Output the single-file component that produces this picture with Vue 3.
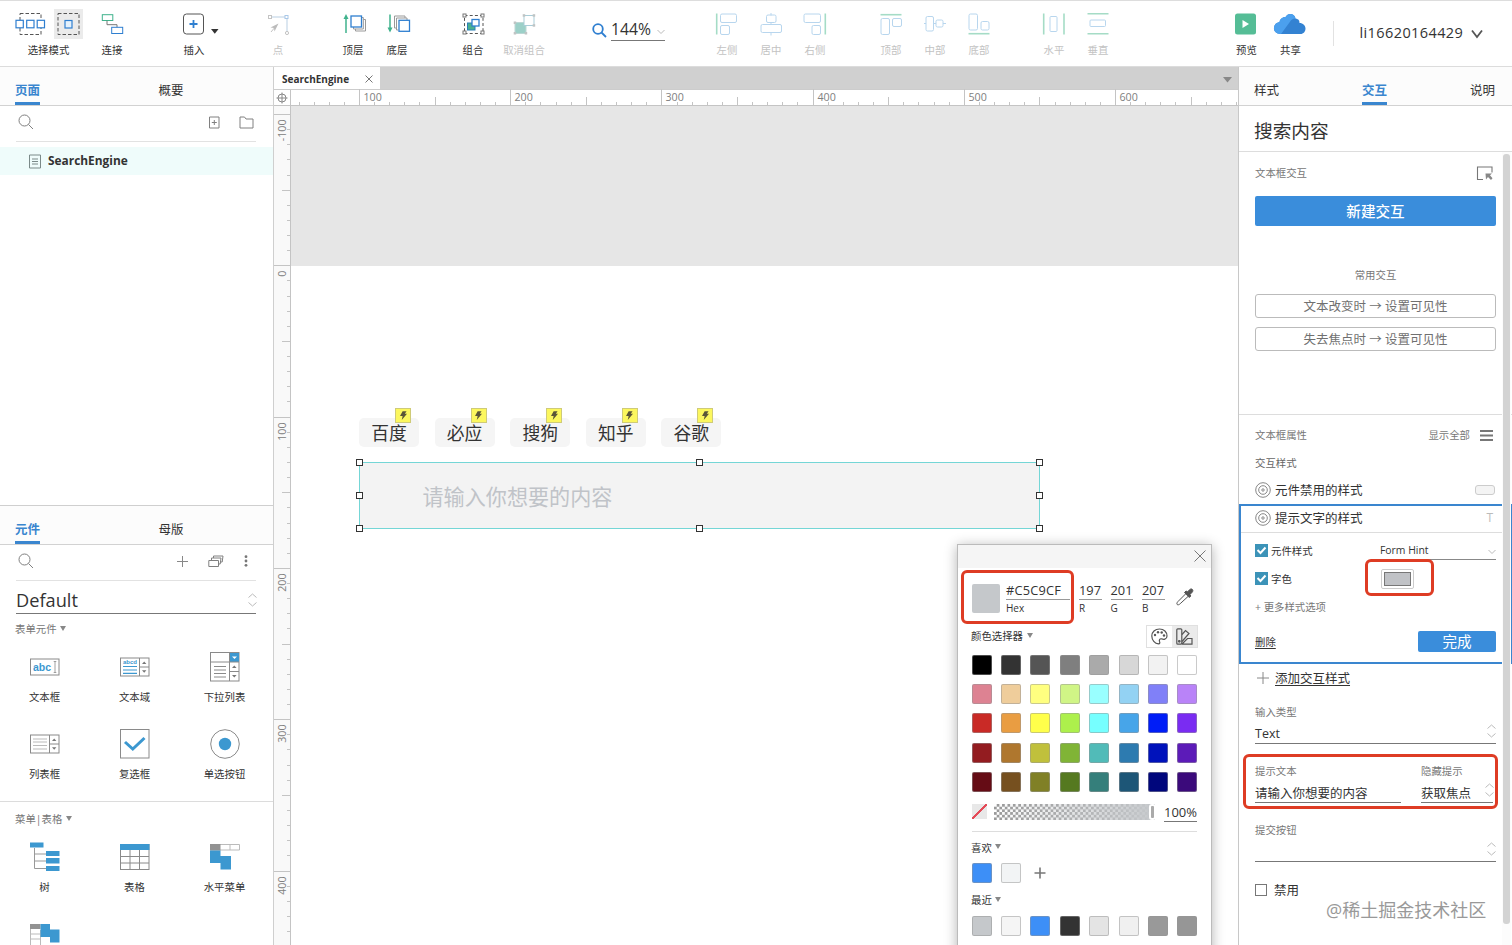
<script setup>
import { computed } from 'vue'

const boxes = {
  left: '<path d="M1.7 1.5v21" stroke="#a5dcc6" stroke-width="1.6"/><rect x="5.5" y="2" width="16" height="8.5" rx="1.5"/><rect x="5.5" y="13.5" width="9" height="9" rx="1.5"/>',
  center: '<path d="M12 1v2.500M12 10.500v2M12 20.500v3" /><rect x="7.500" y="3" width="9.500" height="7.500" rx="1.5"/><rect x="2" y="12.500" width="20.500" height="8" rx="1.5"/>',
  right: '<path d="M22.300 1.500v21" stroke="#a5dcc6" stroke-width="1.600"/><rect x="1" y="2" width="16.500" height="8.500" rx="1.500"/><rect x="9" y="13.500" width="8.500" height="9" rx="1.500"/>',
  top: '<path d="M1.500 2.700h21" stroke="#a5dcc6" stroke-width="1.600"/><rect x="2" y="6.500" width="8.500" height="16" rx="1.500"/><rect x="13.500" y="6.500" width="9" height="8" rx="1.500"/>',
  middle: '<path d="M1 11.500h2M10.500 11.500h2.500M20 11.500h3"/><rect x="3" y="4.500" width="7.500" height="14.500" rx="1.500"/><rect x="13" y="8" width="7" height="7" rx="1.500"/>',
  bottom: '<path d="M1.500 21.700h21" stroke="#a5dcc6" stroke-width="1.600"/><rect x="2" y="2" width="8.500" height="16" rx="1.500"/><rect x="14" y="9.500" width="8" height="8.500" rx="1.500"/>'
}

const icons = {
  connect: '<rect x="2.300" y="2.700" width="10.500" height="5.800" stroke="#3fb28c"/><path d="M7 8.700v4h10v2.500" stroke="#777"/><rect x="11.700" y="15.300" width="11" height="6.200" stroke="#2f7fd0"/>',
  insert: '<rect x="1.500" y="2" width="20" height="20" rx="3" stroke="#555"/><path d="M11.500 8v8M7.500 12h8" stroke="#2f7fd0" stroke-width="1.800"/><path d="M29 17h7.500l-3.700 4.700z" fill="#333" stroke="none"/>',
  point: '<g stroke="#c4c4c4"><path d="M5.500 5H19M21 7v13" stroke="#b9cfe3"/><rect x="2.500" y="3.500" width="3" height="3"/><rect x="19" y="3.500" width="3" height="3" stroke="#a9c8e8"/><circle cx="21" cy="21" r="1.600"/><path d="M5 20l5-6"/><path d="M12.500 11.500l-8 4 3.500.500.500 3.500z" fill="#bbb" stroke="none"/></g>',
  front: '<path d="M5 21V4" stroke="#3fb28c" stroke-width="1.500"/><path d="M2.500 7L5 2l2.500 5z" fill="#3fb28c" stroke="none"/><path d="M20.500 5.500h1.800v11.500H12.500v-2M22.500 7.500h2v11.500H14.500v-2" stroke="#999"/><rect x="10" y="4" width="10.500" height="11" stroke="#2f7fd0" stroke-width="1.300"/>',
  back: '<path d="M5 2.500v16" stroke="#3fb28c" stroke-width="1.500"/><path d="M2.500 15.500l2.500 5 2.500-5z" fill="#3fb28c" stroke="none"/><path d="M11.500 16h-2V4H20v2M13.500 18h-2V6H22v2" stroke="#999"/><rect x="14" y="8.300" width="10.500" height="11" stroke="#2f7fd0" stroke-width="1.300"/>',
  group: '<rect x="3.500" y="3.500" width="18.500" height="18" stroke="#555" stroke-dasharray="3 2.200"/><g fill="#fff" stroke="#777"><rect x="2" y="2" width="3" height="3"/><rect x="20" y="2" width="3" height="3"/><rect x="2" y="19" width="3" height="3"/><rect x="20" y="19" width="3" height="3"/></g><rect x="6.500" y="11" width="7.500" height="7" fill="#4ab08f" stroke="#2b80b8"/><rect x="11" y="7.500" width="7" height="6.500" fill="#fff" stroke="#2f7fd0" stroke-width="1.300"/>',
  ungroup: '<rect x="3" y="10.500" width="11" height="11" fill="#9cd0c8" stroke="#bcd8d5"/><rect x="12" y="3.500" width="10" height="10" fill="#fff" stroke="#a9cdd8"/><g fill="#c0c4c4" stroke="none"><rect x="10.700" y="2.200" width="2.500" height="2.500"/><rect x="20.700" y="2.200" width="2.500" height="2.500"/><rect x="20.700" y="12.200" width="2.500" height="2.500"/><rect x="1.700" y="9.500" width="2.500" height="2.500"/><rect x="1.700" y="20" width="2.500" height="2.500"/><rect x="12.700" y="20" width="2.500" height="2.500"/></g>',
  distH: '<path d="M1.700 1.500v21M22 1.500v21" stroke="#a5dcc6" stroke-width="1.600"/><rect x="8" y="4.500" width="7" height="15" rx="1"/>',
  distV: '<path d="M1.500 1.700h21M1.500 21.700h21" stroke="#a5dcc6" stroke-width="1.600"/><rect x="4" y="8" width="15.500" height="6.500" rx="1"/>',
  preview: '<rect x="1" y="1.500" width="21" height="21" rx="2.500" fill="#55bd96" stroke="none"/><path d="M8.500 8l6.500 4-6.500 4z" fill="#fff" stroke="none"/>',
  share: '<path d="M3 22C-2 22-4.500 19-4 15.500c.300-3 2.500-5 5.500-5.500C2 6.500 5 5 7.500 5 9 2.500 11 1.500 13 2c2.500.500 4 2 4.500 4.500 3.500.500 4 2.500 4 4.500 3.500 0 6 2.500 6 5.500S25.500 22 22.500 22z" fill="#3382d2" stroke="none"/><path d="M3 22C-2 22-4.500 19-4 15.500c.300-3 2.500-5 5.500-5.500C2 6.500 5 5 7.500 5 9 2.500 11 1.500 13 2c2.500.500 4 2 4.500 4.500-3 .2-4.500 1.500-5.500 3.300z" fill="#4ba0ee" stroke="none"/>',
  ...boxes
}

const toolGroups = [
  { name: 'connect', items: [['connect', '连接']] },
  { name: 'insert', items: [['insert', '插入']] },
  { name: 'point', off: true, items: [['point', '点']] },
  { name: 'order', items: [['front', '顶层'], ['back', '底层']] },
  { name: 'group', items: [['group', '组合']] },
  { name: 'ungroup', off: true, items: [['ungroup', '取消组合']] }
]

const alignGroups = [
  { name: 'h', off: true, items: [['left', '左侧'], ['center', '居中'], ['right', '右侧']] },
  { name: 'v', off: true, items: [['top', '顶部'], ['middle', '中部'], ['bottom', '底部']] },
  { name: 'dist', off: true, items: [['distH', '水平'], ['distV', '垂直']] },
  { name: 'run', items: [['preview', '预览'], ['share', '共享']] }
]

const grey = '#8a8a8a'
const blue = '#3c98d0'
const widgets = {
  input: `<rect x=".5" y="7" width="28.500" height="16" fill="#fff" stroke="${grey}"/><text x="3" y="19" font-size="10.500" font-weight="700" fill="${blue}" font-family="Liberation Sans">abc</text><path d="M25 9.500v11M23.700 9.500h2.600M23.700 20.500h2.600" stroke="${grey}" stroke-width=".8"/>`,
  area: `<rect x=".5" y="6" width="28.500" height="18" fill="#fff" stroke="${grey}"/><path d="M19.500 6v18M19.500 15H29" stroke="${grey}"/><text x="3" y="12.300" font-size="6" font-weight="700" fill="${blue}" font-family="Liberation Sans">abcd</text><path d="M3 14.500h14M3 18h14M3 21.300h14" stroke="${blue}" stroke-width="1.200"/><path d="M22 12l2.200-2.500 2.200 2.500zM22 18.300h4.400l-2.200 2.500z" fill="#777"/>`,
  drop: `<rect x=".5" y=".5" width="28.500" height="28.500" fill="#fff" stroke="${grey}"/><rect x="20" y="1" width="9" height="9" fill="${blue}"/><path d="M22 4.500h5l-2.500 2.500z" fill="#fff"/><path d="M.5 10H29M19.500 1v28M19.500 19.500H29M4 14.500h12M4 18h12M4 21.500h12M4 25h12" stroke="${grey}" stroke-width="1"/><path d="M22 16l2.300-2.500 2.300 2.500zM22 23h4.600l-2.300 2.500z" fill="#777"/>`,
  list: `<rect x=".5" y="6" width="28.500" height="18" fill="#fff" stroke="${grey}"/><path d="M19.500 6v18M19.500 15h9.500" stroke="${grey}"/><path d="M3 10h14M3 13h14M3 16.500h14M3 20h14" stroke="#aaa" stroke-width=".8"/><path d="M22 12l2.200-2.500 2.200 2.500zM22 18.300h4.400l-2.200 2.500z" fill="#777"/>`,
  check: `<rect x=".5" y=".5" width="28.500" height="28.500" fill="#fff" stroke="${grey}"/><path d="M5 13l7.800 7L24.500 9" fill="none" stroke="${blue}" stroke-width="3"/>`,
  radio: `<circle cx="15" cy="15" r="14.300" fill="#fff" stroke="${grey}"/><circle cx="15" cy="15" r="6.200" fill="${blue}"/>`,
  tree: `<path d="M4.500 6v20.500H16M4.500 12H16M4.500 19H16" fill="none" stroke="#999"/><path d="M0 .5h13.500v5H0zM16 9h13.500v5H16zM16 16h13.500v5.500H16zM16 24h13.500v5H16z" fill="${blue}"/>`,
  table: `<rect x=".5" y="2.500" width="28.500" height="25" fill="#fff" stroke="${grey}"/><path d="M10 8v19M19.500 8v19M.5 14.500H29M.5 21H29" stroke="${grey}"/><path d="M0 2h29.500v6H0z" fill="${blue}"/>`,
  hmenu: `<path d="M.5 2.500h29v5.500H.5z" fill="#fff" stroke="#bbb"/><path d="M20 2.500v5.500" stroke="#bbb"/><path d="M0 2h10.500v6.500H0z" fill="#929292"/><path d="M0 8.500h10.500V14H21v13.500H10.500V21H0z" fill="${blue}"/>`,
  vmenu: `<path d="M.5 1v24M10.500 6v19M0 10h10M0 15h10" stroke="#bbb"/><path d="M0 0h10.500v5H0z" fill="#929292"/><path d="M10.500 0H20v5.500h9.500V18.500H20V13h-9.500z" fill="${blue}"/>`
}

const formWidgets = [
  ['input', '文本框'], ['area', '文本域'], ['drop', '下拉列表'],
  ['list', '列表框'], ['check', '复选框'], ['radio', '单选按钮']
]
const menuWidgets = [['tree', '树'], ['table', '表格'], ['hmenu', '水平菜单'], ['vmenu', '']]

const engines = ['百度', '必应', '搜狗', '知乎', '谷歌']

const palette = [
  '#000000', '#333333', '#555555', '#7f7f7f', '#aaaaaa', '#d7d7d7', '#f2f2f2', '#ffffff',
  '#dd8292', '#efcd9b', '#ffff80', '#d0f586', '#99ffff', '#93d2f3', '#8080f8', '#b983f8',
  '#c92a26', '#e99d42', '#ffff4b', '#adf04c', '#76ffff', '#47a5e9', '#001df7', '#7a2cf2',
  '#931c20', '#af772e', '#c0c03c', '#80b436', '#51bbb8', '#2d7bb0', '#0012bb', '#5c1bb8',
  '#650c15', '#76501f', '#808026', '#557920', '#357f7b', '#1d5677', '#00067c', '#3b0a7b'
]
const recent = ['#c5c8cb', '#f5f5f5', '#3d8ff7', '#333333', '#e4e4e4', '#f0f0f0', '#999999', '#969696']

// Ruler ticks: one every 10 units, labelled every 100
const makeTicks = (from, to, base, baseValue, scale) => {
  const list = []
  for (let v = from; v <= to; v += 10) {
    list.push({
      v,
      pos: Math.round(base + (v - baseValue) * scale) + 0.5,
      len: v % 100 === 0 ? 17 : v % 50 === 0 ? 9 : 4
    })
  }
  return list
}
const hTicks = computed(() => makeTicks(60, 680, 68, 100, 1.512))
const vTicks = computed(() => makeTicks(-100, 440, 8, -100, 1.513))
const handles = ['nw', 'n', 'ne', 'w', 'e', 'sw', 's', 'se']
</script>

<template>
  <div class="app">
    <header class="toolbar">
      <div class="tool tool-mode">
        <div class="mode-icons">
          <svg class="mode" width="32" height="30" viewBox="0 0 32 30" fill="none">
            <rect x="6" y="4.5" width="21" height="21" stroke="#555" stroke-dasharray="3.500 2" />
            <g fill="#fff" stroke="#2f7fd0" stroke-width="1.200">
              <rect x="2" y="11.300" width="7.300" height="7.500" />
              <rect x="12.700" y="11.300" width="7.300" height="7.500" />
              <rect x="23.200" y="11.300" width="7.300" height="7.500" />
            </g>
          </svg>
          <svg class="mode active" width="29" height="30" viewBox="0 0 29 30" fill="none">
            <rect x="4" y="4.500" width="21" height="21" stroke="#555" stroke-dasharray="3.500 2" />
            <rect x="11" y="11.500" width="7" height="7.500" fill="#e4f1fc" stroke="#2f7fd0" stroke-width="1.200" />
          </svg>
        </div>
        <span class="tool-label">选择模式</span>
      </div>
      <div v-for="g in toolGroups" :key="g.name" class="tool-group" :class="['g-' + g.name, { off: g.off }]">
        <div v-for="[icon, label] in g.items" :key="icon" class="tool">
          <svg class="tool-icon" viewBox="0 0 24 24" fill="none" v-html="icons[icon]"></svg>
          <span class="tool-label">{{ label }}</span>
        </div>
      </div>
      <div class="zoom">
        <svg width="15" height="15" viewBox="0 0 15 15" fill="none" stroke="#2f7fd0" stroke-width="1.800">
          <circle cx="6" cy="6" r="4.800" />
          <path d="M9.500 9.500l4.500 4.500" />
        </svg>
        <div class="zoom-value">
          <span>144%</span>
          <svg width="8" height="6" viewBox="0 0 8 6" fill="none" stroke="#bbb"><path d="M.5 3l3.500 3.500L7.500 3" /></svg>
        </div>
      </div>
      <div v-for="g in alignGroups" :key="g.name" class="tool-group" :class="['g-' + g.name, { off: g.off }]">
        <div v-for="[icon, label] in g.items" :key="icon" class="tool">
          <svg class="tool-icon" viewBox="0 0 24 24" fill="none" stroke="#b8d6ee" v-html="icons[icon]"></svg>
          <span class="tool-label">{{ label }}</span>
        </div>
      </div>
      <div class="user">
        <span>li16620164429</span>
        <svg width="12" height="9" viewBox="0 0 12 9" fill="none" stroke="#555" stroke-width="1.800"><path d="M1 1.500l5 6.500 5-6.500" /></svg>
      </div>
    </header>

    <main class="workspace">
      <aside class="left">
        <section class="pages">
          <nav class="tabs">
            <span class="tab active">页面</span>
            <span class="tab">概要</span>
          </nav>
          <div class="search-row">
            <svg width="16" height="16" viewBox="0 0 16 16" fill="none" stroke="#808080"><circle cx="6.500" cy="6.500" r="5.500" /><path d="M10.500 10.500l4.500 4.500" /></svg>
            <div class="page-actions">
              <svg width="11" height="13" viewBox="0 0 11 13" fill="none" stroke="#808080"><path d="M.5 1h9.500v11H.5zM5.300 4v5M2.800 6.500h5" /></svg>
              <svg width="15" height="13" viewBox="0 0 15 13" fill="none" stroke="#808080"><path d="M1 1h4.500l1.500 2h7v9H1z" /></svg>
            </div>
          </div>
          <div class="page-item">
            <svg width="12" height="15" viewBox="0 0 12 15" fill="none" stroke="#7b8a89"><path d="M.5 1h11v13H.5zM3 5h6M3 7.500h6M3 10h6" /></svg>
            <span>SearchEngine</span>
          </div>
        </section>

        <section class="library">
          <nav class="tabs">
            <span class="tab active">元件</span>
            <span class="tab">母版</span>
          </nav>
          <div class="search-row">
            <svg width="16" height="16" viewBox="0 0 16 16" fill="none" stroke="#808080"><circle cx="6.500" cy="6.500" r="5.500" /><path d="M10.500 10.500l4.500 4.500" /></svg>
            <div class="lib-actions">
              <svg width="11" height="11" viewBox="0 0 11 11" stroke="#888"><path d="M5.500 0v11M0 5.500h11" /></svg>
              <svg width="16" height="13" viewBox="0 0 16 13" fill="#fff" stroke="#808080"><path d="M5.500 3V1h9.500l-.8 6h-2M3.500 5V3H13l-.8 6h-2M.8 5.500h9.700v6H.8z" /></svg>
              <svg width="4" height="12" viewBox="0 0 4 12" fill="#777"><circle cx="2" cy="1.700" r="1.400" /><circle cx="2" cy="6" r="1.400" /><circle cx="2" cy="10.300" r="1.400" /></svg>
            </div>
          </div>
          <div class="lib-select">
            <span>Default</span>
            <svg class="updown" viewBox="0 0 9 14"><path d="M.5 4.500l4-3.500 4 3.500M.5 9.500l4 3.500 4-3.500" /></svg>
          </div>
          <div class="lib-title">表单元件 <i class="tri"></i></div>
          <div class="widget-grid">
            <div v-for="[icon, label] in formWidgets" :key="icon" class="widget">
              <svg width="30" height="30" viewBox="0 0 30 30" v-html="widgets[icon]"></svg>
              <span>{{ label }}</span>
            </div>
          </div>
          <div class="lib-title second">菜单|表格 <i class="tri"></i></div>
          <div class="widget-grid">
            <div v-for="[icon, label] in menuWidgets" :key="icon" class="widget">
              <svg width="30" height="30" viewBox="0 0 30 30" v-html="widgets[icon]"></svg>
              <span>{{ label }}</span>
            </div>
          </div>
        </section>
      </aside>

      <section class="center">
        <div class="doc-tabs">
          <div class="doc-tab">
            <span>SearchEngine</span>
            <svg width="8" height="8" viewBox="0 0 8 8" stroke="#777"><path d="M.5.500l7 7M7.500.500l-7 7" /></svg>
          </div>
          <svg class="tab-menu" width="9" height="6" viewBox="0 0 9 6" fill="#888"><path d="M0 0h9L4.500 5.500z" /></svg>
        </div>
        <div class="ruler-row">
          <div class="ruler-corner">
            <svg width="12" height="12" viewBox="0 0 12 12" fill="none" stroke="#888"><circle cx="6" cy="6" r="4" /><path d="M6 .5v11M.5 6h11" /></svg>
          </div>
          <svg class="ruler-h" width="947" height="17">
            <g v-for="t in hTicks" :key="t.v">
              <path :d="`M${t.pos} ${17 - t.len}V17`" stroke="#c4c4c4" />
              <text v-if="t.v % 100 === 0" :x="t.pos + 4" y="12">{{ t.v }}</text>
            </g>
          </svg>
        </div>
        <div class="stage">
          <svg class="ruler-v" width="17" height="839">
            <g v-for="t in vTicks" :key="t.v">
              <path :d="`M${17 - t.len} ${t.pos}H17`" stroke="#c4c4c4" />
              <text v-if="t.v % 100 === 0" text-anchor="end" :transform="`translate(12 ${t.pos + 5}) rotate(-90)`">{{ t.v }}</text>
            </g>
          </svg>
          <div class="canvas">
            <div class="void"></div>
            <div class="engines">
              <div v-for="name in engines" :key="name" class="engine">
                {{ name }}
                <span class="bolt">
                  <svg width="7" height="9" viewBox="0 0 8 10" fill="#5a5538"><path d="M3 0h4.500L5.500 3H8L2 10l1-4.500H0z" /></svg>
                </span>
              </div>
            </div>
            <div class="search-box">
              <span>请输入你想要的内容</span>
              <i v-for="h in handles" :key="h" class="handle" :class="h"></i>
            </div>

            <div class="picker">
              <div class="picker-head">
                <svg width="12" height="12" viewBox="0 0 12 12" stroke="#777"><path d="M.5.500l11 11M11.500.500l-11 11" /></svg>
              </div>
              <div class="picker-values">
                <i class="current"></i>
                <div class="val hex"><b>#C5C9CF</b><span>Hex</span></div>
                <div class="val"><b>197</b><span>R</span></div>
                <div class="val"><b>201</b><span>G</span></div>
                <div class="val"><b>207</b><span>B</span></div>
                <svg width="18" height="18" viewBox="0 0 18 18" fill="none" stroke="#555"><path d="M9.500 6l-7.500 7.500c-1 1-1.500 2.300-.8 3s2 .2 3-.8L12 8.500" /><path d="M8.500 4.500l1.500-1.500 1.700.8 2-2.200c2-1.800 4.300.5 2.500 2.600L14 6.500l.8 1.500-1.500 1.500z" fill="#555" /></svg>
              </div>
              <div class="picker-mode">
                <span>颜色选择器 <i class="tri"></i></span>
                <div class="mode-switch">
                  <div><svg width="17" height="17" viewBox="0 0 17 17" fill="none" stroke="#555" stroke-width="1.200"><path d="M8.500 1C4 1 .8 4 .8 8s3 7.500 6.700 7.800c1.500 0 1.500-1.300 1-2.300-.6-1.800.5-3 2-2.700 1.800.8 5.500 1 5.500-2.800C16 4 13 1 8.500 1z" /><g fill="#555" stroke="none"><circle cx="4" cy="7" r="1.200" /><circle cx="7" cy="4.300" r="1.200" /><circle cx="10.700" cy="4.500" r="1.200" /><circle cx="13" cy="7.500" r="1.200" /></g></svg></div>
                  <div class="on"><svg width="17" height="17" viewBox="0 0 17 17" fill="none" stroke="#555" stroke-width="1.200"><rect x=".8" y=".8" width="5" height="15.400" rx="1" /><path d="M6 6.500L9.500 2.500 13 5.500 6 13.500M6 16.200h10V10.500h-4.500L6 16" /><circle cx="3.300" cy="13.300" r=".8" fill="#444" /></svg></div>
                </div>
              </div>
              <div class="swatches">
                <i v-for="c in palette" :key="c" class="swatch" :style="{ background: c }"></i>
              </div>
              <div class="opacity">
                <i class="none"></i>
                <div class="slider"><i class="knob"></i></div>
                <span>100%</span>
              </div>
              <div class="picker-label">喜欢 <i class="tri"></i></div>
              <div class="swatches">
                <i class="swatch favourite"></i>
                <i class="swatch pale"></i>
                <svg class="add" width="12" height="12" viewBox="0 0 12 12" stroke="#777" stroke-width="1.600"><path d="M6 .5v11M.5 6h11" /></svg>
              </div>
              <div class="picker-label recent">最近 <i class="tri"></i></div>
              <div class="swatches">
                <i v-for="c in recent" :key="c" class="swatch" :style="{ background: c }"></i>
              </div>
              <div class="mark mark-hex"></div>
            </div>
          </div>
        </div>
      </section>

      <aside class="right">
        <nav class="tabs">
          <span class="tab">样式</span>
          <span class="tab active">交互</span>
          <span class="tab">说明</span>
        </nav>
        <h2 class="title">搜索内容</h2>
        <div class="row head">
          <span>文本框交互</span>
          <svg width="16" height="15" viewBox="0 0 16 15" fill="none" stroke="#777"><path d="M6 13.500H.5V1h14.500v5.500" stroke-width="1.100" /><path d="M8.500 7.500h6.500l-2 1.800 2.500 3-1.500 1.700-3-3-2 2.500z" fill="#888" stroke="none" /></svg>
        </div>
        <button class="primary">新建交互</button>
        <div class="common">常用交互</div>
        <button class="ghost">文本改变时 → 设置可见性</button>
        <button class="ghost">失去焦点时 → 设置可见性</button>

        <div class="props">
          <div class="row props-head">
            <span>文本框属性</span>
            <span class="all">显示全部 <svg width="13" height="11" viewBox="0 0 13 11" stroke="#777" stroke-width="1.800"><path d="M0 1h13M0 5.500h13M0 10h13" /></svg></span>
          </div>
          <div class="row sub">交互样式</div>
          <div class="row style-row">
            <svg class="target" viewBox="0 0 16 16"><circle cx="8" cy="8" r="7.300" /><circle cx="8" cy="8" r="4.300" /><circle cx="8" cy="8" r="1.200" /></svg>
            <span>元件禁用的样式</span>
            <i class="pill"></i>
          </div>
        </div>

        <div class="editing">
          <div class="row style-row">
            <svg class="target" viewBox="0 0 16 16"><circle cx="8" cy="8" r="7.300" /><circle cx="8" cy="8" r="4.300" /><circle cx="8" cy="8" r="1.200" /></svg>
            <span>提示文字的样式</span>
            <em>T</em>
          </div>
          <div class="row opt">
            <svg class="check" viewBox="0 0 13 13"><path d="M2.500 6l3 3 5-5.500" /></svg>
            <span>元件样式</span>
            <div class="select">Form Hint <svg width="8" height="6" viewBox="0 0 8 6" fill="none" stroke="#bbb"><path d="M.5 3l3.500 3.500L7.500 3" /></svg></div>
          </div>
          <div class="row opt">
            <svg class="check" viewBox="0 0 13 13"><path d="M2.500 6l3 3 5-5.500" /></svg>
            <span>字色</span>
            <div class="color-well"><i></i></div>
          </div>
          <div class="row more">+ 更多样式选项</div>
          <div class="row actions">
            <a>删除</a>
            <button>完成</button>
          </div>
          <div class="mark mark-color"></div>
        </div>

        <div class="fields">
          <div class="row add-style">
            <svg width="12" height="12" viewBox="0 0 12 12" stroke="#888"><path d="M6 0v12M0 6h12" /></svg>
            <a>添加交互样式</a>
          </div>
          <label class="first">输入类型</label>
          <div class="field">Text <svg class="updown" viewBox="0 0 9 14"><path d="M.5 4.500l4-3.500 4 3.500M.5 9.500l4 3.500 4-3.500" /></svg></div>
          <div class="pair">
            <div class="hint">
              <label>提示文本</label>
              <div class="field">请输入你想要的内容</div>
            </div>
            <div class="hide-hint">
              <label>隐藏提示</label>
              <div class="field">获取焦点 <svg class="updown" viewBox="0 0 9 14"><path d="M.5 4.500l4-3.500 4 3.500M.5 9.500l4 3.500 4-3.500" /></svg></div>
            </div>
          </div>
          <label>提交按钮</label>
          <div class="field"><svg class="updown" viewBox="0 0 9 14"><path d="M.5 4.500l4-3.500 4 3.500M.5 9.500l4 3.500 4-3.500" /></svg></div>
          <div class="row disable"><i class="empty-check"></i><span>禁用</span></div>
          <div class="mark mark-pair"></div>
        </div>
        <div class="track"><i class="scrollbar"></i></div>
        <div class="watermark">@稀土掘金技术社区</div>
      </aside>
    </main>
  </div>
</template>

<style>
body {
  overflow: hidden;
  background: #fff;
}
</style>

<style scoped>
.app {
  width: 1512px;
  height: 945px;
  overflow: hidden;
  display: flex;
  flex-direction: column;
  font-family: "Open Sans", "Noto Sans CJK SC", sans-serif;
  font-size: 12.5px;
  line-height: 1;
  color: #333;
}

.app * {
  box-sizing: border-box;
}

svg {
  display: block;
  flex: none;
  overflow: visible;
}

button {
  font-family: inherit;
  line-height: 1;
  padding: 0;
  border: 0;
  display: block;
}

/* toolbar */
.toolbar {
  flex: none;
  height: 67px;
  display: flex;
  border-top: 1px solid #ddd;
  border-bottom: 1px solid #dcdcdc;
}

.tool-group {
  display: flex;
}

.tool {
  width: 44px;
  padding-top: 11px;
  display: flex;
  flex-direction: column;
  align-items: center;
}

.tool-icon {
  width: 24px;
  height: 24px;
  margin-left: -1px;
}

.tool-label {
  height: 12px;
  margin-top: 8px;
  font-size: 10.4px;
  line-height: 12px;
  white-space: nowrap;
}

.off .tool-label {
  color: #c3c3c3;
}

.tool-mode {
  width: 90px;
  padding: 8px 0 0 7px;
}

.mode-icons {
  display: flex;
  gap: 8px;
  margin-left: -1px;
}

.mode.active {
  background: #ebebeb;
}

.tool-mode .tool-label {
  margin-top: 5px;
}

.g-insert {
  margin-left: 38px;
}

.g-point {
  margin-left: 40px;
}

.g-order {
  margin-left: 31px;
}

.g-group {
  margin-left: 32px;
}

.g-ungroup .tool {
  width: 58px;
}

.zoom {
  margin: 18px 0 0 39px;
  width: 73px;
  height: 22px;
  display: flex;
  align-items: center;
  justify-content: space-between;
}

.zoom-value {
  width: 54px;
  height: 22px;
  display: flex;
  align-items: center;
  justify-content: space-between;
  border-bottom: 1px solid #777;
  font-size: 15.700px;
}

.g-h {
  margin-left: 40px;
}

.g-v {
  margin-left: 32px;
}

.g-dist {
  margin-left: 31px;
}

.g-run {
  margin-left: 104.500px;
}

.user {
  margin: 20px 0 0 20px;
  padding-left: 26px;
  height: 25px;
  border-left: 1px solid #e2e2e2;
  display: flex;
  align-items: center;
  gap: 8px;
  font-size: 14.500px;
}

.user span {
  letter-spacing: 0.400px;
}

/* shared */
.workspace {
  flex: 1;
  min-height: 0;
  display: flex;
}

.tabs {
  height: 39px;
  display: flex;
  background: #fcfcfc;
  border-bottom: 1px solid #d2d2d2;
}

.tab {
  padding-top: 18px;
  height: 38px;
  border-bottom: 3px solid transparent;
}

.tab.active {
  color: #3a86cf;
  font-weight: 700;
  border-bottom-color: #3a86cf;
}

.tri {
  display: inline-block;
  border: 3px solid transparent;
  border-top: 5px solid #888;
  border-bottom: 0;
  vertical-align: 2.500px;
  margin-left: 1px;
}

.updown {
  width: 9px;
  height: 14px;
  margin-left: auto;
  fill: none;
  stroke: #bbb;
}

.mark {
  position: absolute;
  border: 3px solid #de3c24;
  border-radius: 6px;
}

/* left */
.left {
  flex: none;
  width: 274px;
  display: flex;
  flex-direction: column;
  border-right: 1px solid #cfcfcf;
}

.left .tabs {
  padding-left: 15px;
}

.left .tab + .tab {
  margin-left: 118.500px;
}

.pages {
  height: 438px;
}

.library {
  flex: 1;
  min-height: 0;
  overflow: hidden;
  border-top: 1px solid #cfcfcf;
}

.search-row {
  height: 36px;
  margin: 0 17px 0 16px;
  padding: 0 2px;
  display: flex;
  align-items: center;
  justify-content: space-between;
  border-bottom: 1px solid #e2e2e2;
  padding-bottom: 3px;
}

.page-actions {
  display: flex;
  align-items: center;
  gap: 19px;
}

.lib-actions {
  display: flex;
  align-items: center;
  gap: 20px;
  padding-right: 6px;
}

.page-item {
  margin-top: 5px;
  height: 28px;
  padding-left: 29px;
  display: flex;
  align-items: center;
  gap: 7px;
  background: #effcfb;
  font-weight: 700;
  font-size: 11.900px;
}

.lib-select {
  height: 33px;
  margin: 0 17px 0 16px;
  padding-top: 6px;
  display: flex;
  align-items: center;
  justify-content: space-between;
  border-bottom: 1px solid #777;
  font-size: 18.200px;
}

.lib-select .updown {
  margin-right: -1px;
}

.lib-title {
  padding: 10px 0 0 15px;
  height: 37.500px;
  font-size: 10.400px;
  color: #777;
}

.lib-title.second {
  height: 41px;
  padding-top: 12px;
  border-top: 1px solid #dcdcdc;
}

.widget-grid {
  display: grid;
  grid-template-columns: repeat(3, 90px);
  grid-auto-rows: 77.500px;
  margin-left: -0.500px;
}

.second + .widget-grid {
  grid-auto-rows: 82px;
}

.lib-title:not(.second) + .widget-grid {
  height: 149.500px;
}

.widget {
  display: flex;
  flex-direction: column;
  align-items: center;
  gap: 10px;
  font-size: 10.400px;
}

.widget svg {
  overflow: hidden;
}

/* center */
.center {
  flex: none;
  width: 964px;
  display: flex;
  flex-direction: column;
}

.doc-tabs {
  height: 22px;
  display: flex;
  align-items: center;
  justify-content: space-between;
  background: #d0d0d0;
  padding-right: 6px;
}

.doc-tab {
  width: 106px;
  height: 22px;
  padding: 1px 7px 0 8px;
  display: flex;
  align-items: center;
  justify-content: space-between;
  background: #fff;
  font-size: 10px;
  font-weight: 700;
}

.tab-menu {
  margin-top: 4px;
}

.ruler-row {
  height: 17px;
  display: flex;
  border-top: 1px solid #ccc;
  border-bottom: 1px solid #c4c4c4;
}

.ruler-corner {
  width: 17px;
  display: grid;
  place-items: center;
  border-right: 1px solid #c4c4c4;
}

.ruler-h {
  margin-top: -1px;
}

.ruler-h text,
.ruler-v text {
  font-size: 10.700px;
  fill: #808080;
}

.stage {
  flex: 1;
  min-height: 0;
  display: flex;
}

.ruler-v {
  background: #f9f9f9;
  border-right: 1px solid #c4c4c4;
}

.canvas {
  position: relative;
  flex: 1;
  overflow: hidden;
}

.void {
  height: 160px;
  background: #e6e6e6;
}

.engines {
  display: flex;
  gap: 15.600px;
  margin: 152px 0 0 68px;
}

.engine {
  position: relative;
  width: 60px;
  height: 29px;
  padding-top: 2px;
  display: grid;
  place-items: center;
  border-radius: 5px;
  background: #f5f5f5;
  font-size: 17.800px;
}

.bolt {
  position: absolute;
  left: 36px;
  top: -10px;
  width: 16px;
  height: 15px;
  display: grid;
  place-items: center;
  background: #fcf75e;
  border: 1px solid #cfcb78;
}

.search-box {
  position: relative;
  margin: 15px 0 0 68px;
  width: 681px;
  height: 67px;
  padding: 3px 0 0 62.500px;
  display: flex;
  align-items: center;
  border: 1px solid #74d6d6;
  background: #f3f3f3;
  color: #c0c3c8;
  font-size: 21.100px;
}

.handle {
  position: absolute;
  width: 7px;
  height: 7px;
  margin: -4px;
  border: 1px solid #333;
  background: #fff;
}

.nw, .w, .sw { left: 0; }
.n, .s { left: 50%; }
.ne, .e, .se { right: 0; }
.nw, .n, .ne { top: 0; }
.w, .e { top: 50%; }
.sw, .s, .se { bottom: 0; }

/* color picker */
.picker {
  position: absolute;
  left: 666px;
  top: 438px;
  width: 255px;
  height: 420px;
  padding: 0 14px;
  background: #fff;
  border: 1px solid #bbb;
  box-shadow: 0 2px 12px rgba(0, 0, 0, 0.3);
}

.picker-head {
  height: 23px;
  margin: 0 -14px;
  padding: 0 5px 1px 0;
  display: flex;
  align-items: center;
  justify-content: flex-end;
  background: #f5f5f5;
}

.picker-values {
  height: 54px;
  padding-top: 16px;
  display: flex;
  gap: 9px;
}

.current {
  width: 28px;
  height: 29px;
  margin-right: -3px;
  border-radius: 2px;
  background: #c5c8cb;
}

.val {
  width: 22.500px;
  font-size: 10px;
}

.val b {
  display: block;
  height: 16px;
  margin-bottom: 3px;
  border-bottom: 1px solid #999;
  font-weight: 400;
  font-size: 12.800px;
}

.val.hex {
  width: 64px;
}

.hex b {
  font-size: 12.800px;
  letter-spacing: 0.200px;
}

.picker-values svg {
  margin: 4px 0 0 2px;
}

.picker-mode {
  height: 32.500px;
  display: flex;
  align-items: center;
  justify-content: space-between;
  font-size: 10.400px;
  padding-bottom: 4px;
  margin: 0 -1px;
}

.mode-switch {
  display: flex;
  border: 1px solid #e0e0e0;
}

.mode-switch div {
  width: 25px;
  height: 21px;
  display: grid;
  place-items: center;
}

.mode-switch .on {
  background: #ebebeb;
}

.swatches {
  display: grid;
  grid-template-columns: repeat(8, 20px);
  grid-auto-rows: 20px;
  gap: 9.400px;
  margin-left: -0.300px;
}

.swatch {
  border: 1px solid rgba(150, 150, 150, 0.5);
  border-radius: 2px;
}

.favourite {
  background: #3d8ff7;
}

.pale {
  background: #f2f4f5;
}

.add {
  align-self: center;
  justify-self: center;
}

.opacity {
  height: 40px;
  display: flex;
  align-items: center;
  gap: 7px;
  border-bottom: 1px solid #ddd;
  font-size: 13px;
}

.none {
  width: 15px;
  height: 15px;
  background: linear-gradient(135deg, #e8e8e8 45%, #e44b58 45%, #e44b58 55%, #e8e8e8 55%);
}

.slider {
  position: relative;
  width: 161px;
  height: 16px;
  background:
    linear-gradient(90deg, rgba(197, 200, 203, 0), #c5c8cb),
    repeating-conic-gradient(#999 0 25%, #fff 0 50%) 0 0 / 5.400px 5.400px;
}

.knob {
  position: absolute;
  right: -1px;
  top: 0;
  width: 7px;
  height: 16px;
  border: 2px solid #fff;
  border-radius: 3px;
  background: #aaa;
}

.opacity span {
  margin-left: auto;
  padding: 4px 0 2px;
  border-bottom: 1px solid #777;
}

.picker-label {
  height: 31px;
  padding-top: 10.500px;
  margin-left: -1px;
  font-size: 10.400px;
}

.picker-label.recent {
  height: 33px;
  padding-top: 12px;
}

.mark-hex {
  left: 3px;
  top: 25px;
  width: 113px;
  height: 54px;
}

/* right */
.right {
  position: relative;
  flex: 1;
  border-left: 1px solid #c8c8c8;
  padding: 0 16px;
  overflow: hidden;
}

.right .tabs {
  margin: 0 -16px;
  padding: 0 17px 0 15px;
  justify-content: space-between;
}

.title {
  height: 46px;
  margin: 0 -16px;
  padding: 16px 0 0 15px;
  border-bottom: 1px solid #ddd;
  font-size: 18.700px;
  font-weight: 400;
  line-height: 18px;
}

.row {
  display: flex;
  align-items: center;
}

.head {
  height: 44px;
  justify-content: space-between;
  padding: 0 3px 1px 0;
  font-size: 10.400px;
  color: #777;
}

.primary {
  width: 241px;
  height: 30px;
  border-radius: 2px;
  background: #3a8ddb;
  color: #fff;
  font-size: 14.600px;
  font-weight: 500;
}

.common {
  height: 30px;
  margin-top: 34px;
  margin-bottom: 4px;
  line-height: 30px;
  text-align: center;
  font-size: 10.400px;
  color: #777;
}

.ghost {
  width: 241px;
  height: 24px;
  margin-bottom: 9px;
  padding-top: 2px;
  border: 1px solid #bbb;
  border-radius: 3px;
  background: #fff;
  color: #707070;
  font-size: 12.500px;
}

.props {
  margin: 63px -16px 0;
  padding: 0 16px;
  border-top: 1px solid #ddd;
}

.props-head {
  height: 40px;
  justify-content: space-between;
  padding-right: 3px;
  font-size: 10.400px;
  color: #777;
}

.all {
  display: flex;
  align-items: center;
  gap: 10px;
}

.sub {
  height: 17px;
  font-size: 10.400px;
  color: #666;
}

.style-row {
  gap: 4px;
  height: 28px;
}

.style-row span {
  padding-top: 2px;
}

.props .style-row {
  margin-top: 4px;
}

.target {
  width: 16px;
  height: 16px;
  fill: none;
  stroke: #888;
}

.pill {
  width: 20px;
  height: 10px;
  margin-left: auto;
  margin-right: 1px;
  border: 1px solid #ccc;
  border-radius: 3px;
  background: #f4f4f4;
}

.editing {
  position: relative;
  height: 160px;
  margin: 0 -16px 0 -16px;
  padding: 0 15px 0 14px;
  border: 2px solid #3a86cf;
  border-right-width: 1px;
}

.editing .style-row {
  height: 27px;
  margin: 0 -15px 0 -14px;
  padding: 0 18px 2px 14px;
  border-bottom: 1px solid #ddd;
}

.style-row em {
  margin-left: auto;
  font-style: normal;
  color: #bbb;
  font-size: 12px;
}

.opt {
  height: 20px;
  margin-top: 8px;
  font-size: 10.400px;
  gap: 3px;
}

.check {
  width: 13px;
  height: 13px;
  margin-bottom: 1px;
  background: #3c93b8;
  fill: none;
  stroke: #fff;
  stroke-width: 2;
}

.select {
  width: 116px;
  height: 18px;
  margin-left: auto;
  padding-bottom: 1px;
  display: flex;
  align-items: center;
  justify-content: space-between;
  border-bottom: 1px solid #888;
}

.color-well {
  margin-left: 86px;
  width: 33px;
  height: 20px;
  padding: 2px;
  border: 1px solid #ccc;
  border-radius: 2px;
}

.color-well i {
  display: block;
  height: 14px;
  border: 1px solid #777;
  background: #c0c2c6;
}

.more {
  height: 20px;
  margin-top: 8px;
  font-size: 10.400px;
  color: #777;
}

.actions {
  margin-top: 14px;
  justify-content: space-between;
  font-size: 10.400px;
}

.row a {
  padding-top: 2px;
  text-decoration: underline;
  text-underline-offset: 2px;
}

.actions button {
  width: 78px;
  height: 21px;
  border-radius: 2px;
  background: #3a8ddb;
  color: #fff;
  font-size: 14.600px;
}

.mark-color {
  left: 124px;
  top: 53px;
  width: 69px;
  height: 37px;
}

.fields {
  position: relative;
}

.add-style {
  height: 28px;
  padding-left: 2px;
  gap: 6px;
}

label {
  display: block;
  height: 20px;
  margin-top: 17px;
  line-height: 20px;
  font-size: 10.400px;
  color: #777;
}

label.first {
  margin-top: 10px;
}

.field {
  width: 241px;
  height: 22px;
  padding-top: 4px;
  display: flex;
  align-items: center;
  justify-content: space-between;
  border-bottom: 1px solid #777;
}

.field .updown {
  margin-top: -7px;
}

.pair {
  display: flex;
  gap: 20px;
}

.pair .field {
  width: 146px;
  padding-top: 6px;
}

.pair .hide-hint .field {
  width: 72px;
  padding-top: 5px;
}

.hide-hint .field .updown {
  margin: -9px -1px 0 0;
}

.mark-pair {
  left: -12px;
  top: 90px;
  width: 255px;
  height: 55px;
}

.disable {
  height: 20px;
  margin-top: 18px;
  gap: 7px;
}

.disable span {
  padding-top: 3px;
}

.empty-check {
  width: 12px;
  height: 12px;
  border: 1px solid #777;
}

.track {
  position: absolute;
  right: 1px;
  top: 85px;
  bottom: 0;
  width: 9px;
  padding: 2px 1px 0;
  background: #fcfcfc;
}

.scrollbar {
  display: block;
  width: 7px;
  height: 770px;
  border-radius: 3px;
  background: #d3d3d3;
}

.watermark {
  position: absolute;
  left: 87px;
  top: 834px;
  font-size: 18px;
  color: #999;
  white-space: nowrap;
}
</style>
